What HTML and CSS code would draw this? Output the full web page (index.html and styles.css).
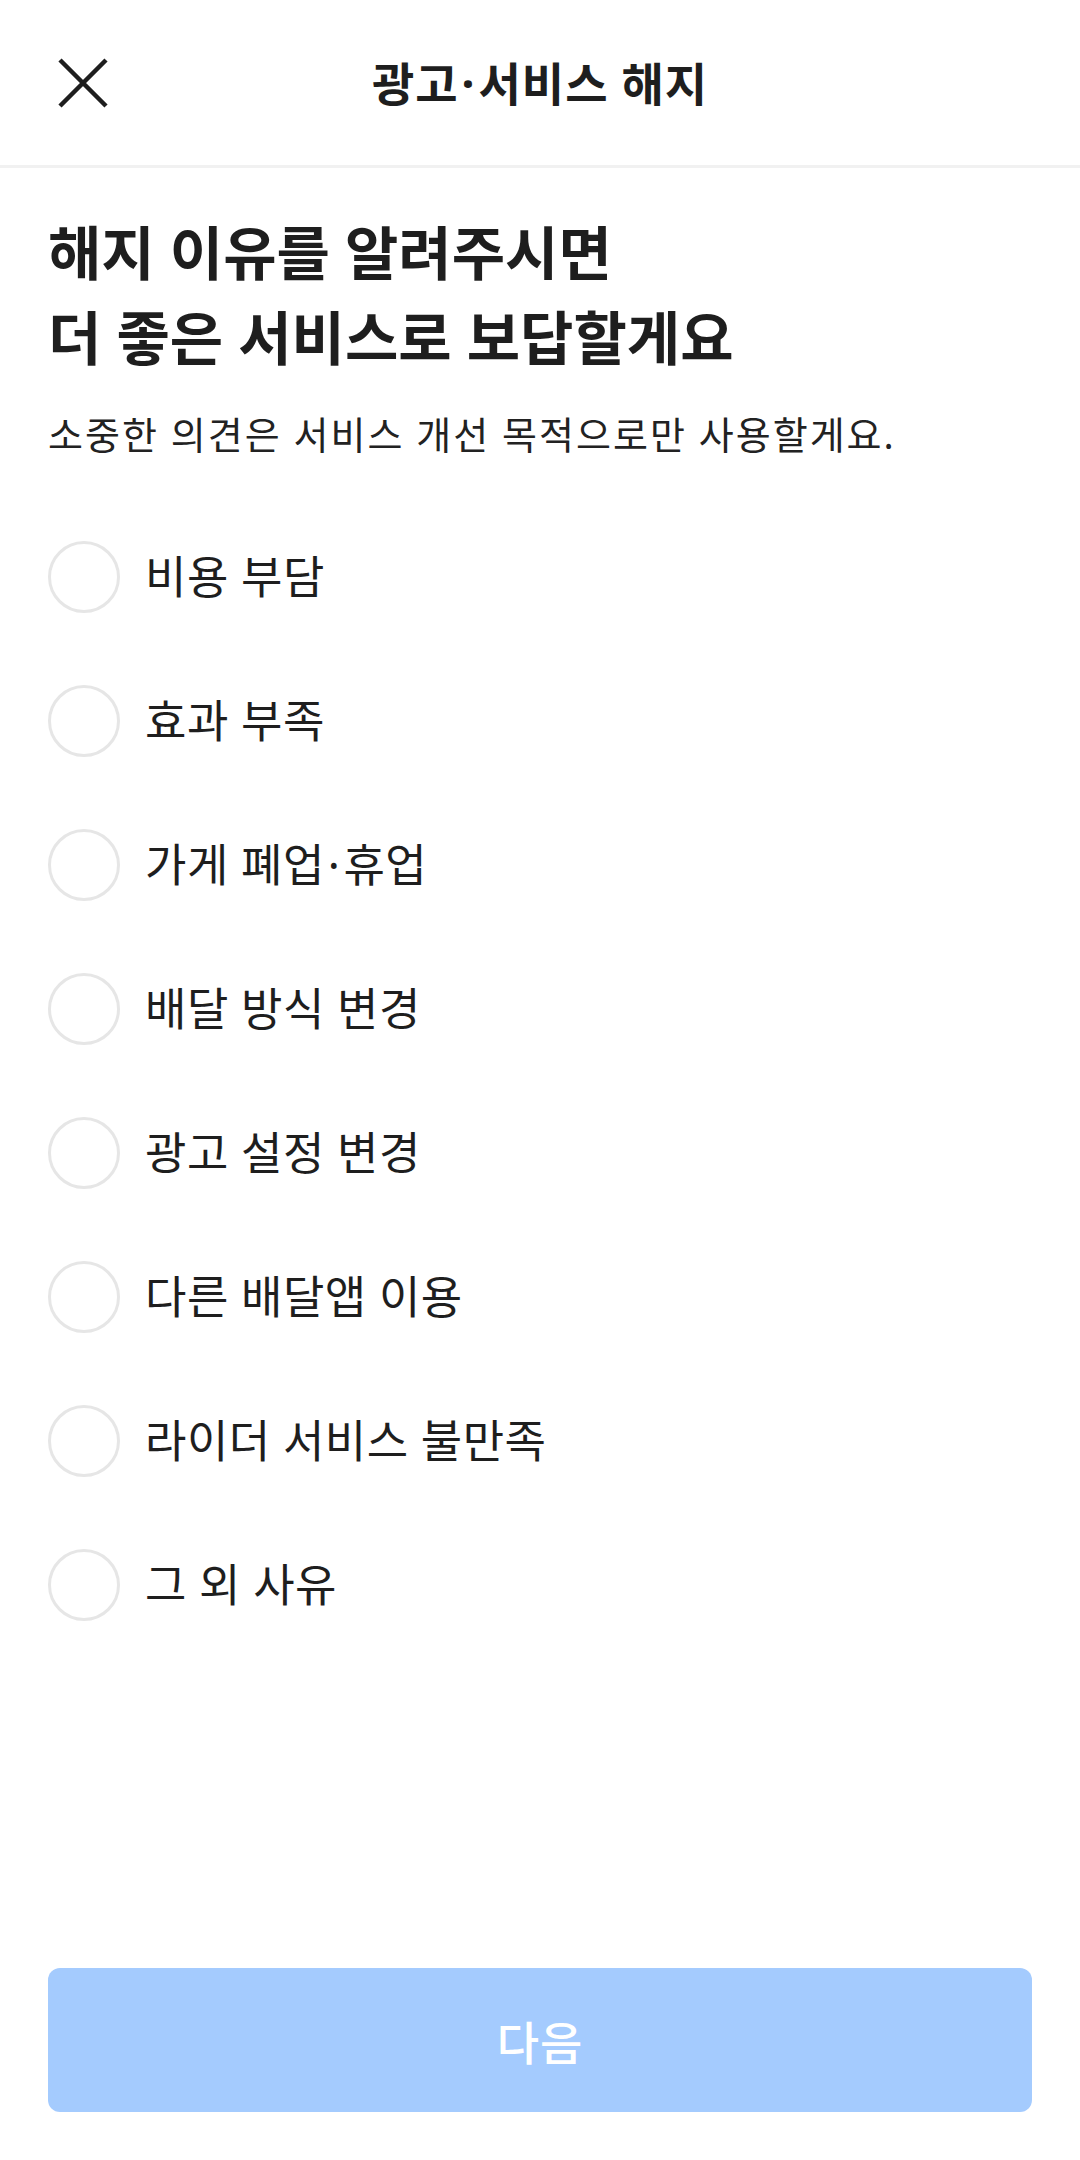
FILE: index.html
```html
<!DOCTYPE html>
<html lang="ko">
<head>
<meta charset="utf-8">
<title>광고·서비스 해지</title>
<link rel="stylesheet" href="styles.css">
</head>
<body>
<div class="page">
  <header class="topbar">
    <button class="close" aria-label="닫기">
      <svg width="50" height="50" viewBox="0 0 50 50"><path d="M2 2 L48 48 M48 2 L2 48" stroke="#1e1e1e" stroke-width="4.5" fill="none"/></svg>
    </button>
    <h1 class="title">광고<span class="dot">·</span>서비스 해지</h1>
    <span></span>
  </header>
  <main class="content">
    <h2 class="heading">해지 이유를 알려주시면<br>더 좋은 서비스로 보답할게요</h2>
    <p class="sub">소중한 의견은 서비스 개선 목적으로만 사용할게요.</p>
    <ul class="options">
      <li class="option"><span class="radio"></span><span class="label">비용 부담</span></li>
      <li class="option"><span class="radio"></span><span class="label">효과 부족</span></li>
      <li class="option"><span class="radio"></span><span class="label">가게 폐업<span class="dot">·</span>휴업</span></li>
      <li class="option"><span class="radio"></span><span class="label">배달 방식 변경</span></li>
      <li class="option"><span class="radio"></span><span class="label">광고 설정 변경</span></li>
      <li class="option"><span class="radio"></span><span class="label">다른 배달앱 이용</span></li>
      <li class="option"><span class="radio"></span><span class="label">라이더 서비스 불만족</span></li>
      <li class="option"><span class="radio"></span><span class="label">그 외 사유</span></li>
    </ul>
  </main>
  <div class="footer">
    <button class="next">다음</button>
  </div>
</div>
</body>
</html>
```
FILE: styles.css
```css
* { box-sizing: border-box; }
html, body { margin: 0; padding: 0; background: #fff; }
body {
  font-family: "Noto Sans", "Noto Sans CJK KR", sans-serif;
  color: #1e1e1e;
}
.page {
  width: 1080px;
  height: 2160px;
  display: flex;
  flex-direction: column;
}
.topbar {
  height: 168px;
  border-bottom: 3px solid #f1f1f1;
  display: grid;
  grid-template-columns: 1fr auto 1fr;
  align-items: center;
}
.close {
  justify-self: start;
  margin-left: 58px;
  padding: 0;
  border: 0;
  background: none;
  width: 50px;
  height: 50px;
  display: flex;
}
.title {
  margin: 0;
  font-size: 46px;
  font-weight: 700;
  letter-spacing: 1px;
  line-height: 60px;
}
.dot {
  margin: 0 3px;
}
.content {
  padding: 0 48px;
}
.heading {
  margin: 42px 0 0;
  font-size: 58px;
  line-height: 85px;
  font-weight: 700;
  letter-spacing: 0;
}
.sub {
  margin: 28px 0 0;
  font-size: 38px;
  line-height: 52px;
  letter-spacing: 2px;
  color: #222;
}
.options {
  list-style: none;
  margin: 81px 0 0;
  padding: 0;
  display: flex;
  flex-direction: column;
  gap: 72px;
}
.option {
  display: flex;
  align-items: center;
  height: 72px;
  gap: 25px;
}
.radio {
  width: 72px;
  height: 72px;
  border-radius: 50%;
  border: 3px solid #e6e6e6;
  flex: none;
}
.label {
  font-size: 45px;
  line-height: 60px;
  letter-spacing: 0.5px;
  color: #1e1e1e;
}
.footer {
  margin-top: auto;
  padding: 0 48px 48px;
}
.next {
  width: 100%;
  height: 144px;
  border: 0;
  border-radius: 12px;
  background: #a4cbfe;
  color: #fff;
  font-family: "Noto Sans", "Noto Sans CJK KR", sans-serif;
  font-size: 46px;
  font-weight: 500;
  letter-spacing: 1px;
}
```
